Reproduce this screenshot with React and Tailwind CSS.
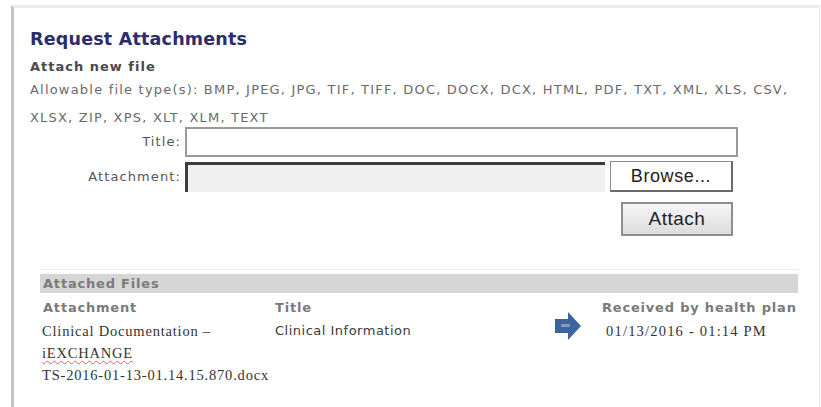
export default function App() {
  const sans = { fontFamily: '"DejaVu Sans", Verdana, sans-serif' };
  const serif = { fontFamily: '"Liberation Serif", "Times New Roman", serif' };
  const arial = { fontFamily: '"Liberation Sans", Arial, sans-serif' };

  return (
    <div className="w-[821px] h-[407px] bg-white pl-[11px] pt-[5px] overflow-hidden" style={sans}>
      <div className="h-[420px] w-[809px] border-l-[3px] border-t-[3px] border-r border-l-[#c4c4c4] border-t-[#ececec] border-r-[#e8e8e8] bg-white pl-[16px] pt-[19px]">
        <h1 className="text-[17.5px] leading-[24px] font-bold text-[#2c2c6c] tracking-[0.2px]">Request Attachments</h1>
        <div className="mt-[8px] text-[13px] leading-[16px] font-bold text-[#4a4a4a] tracking-[1px]">Attach new file</div>
        <p className="mt-[1px] text-[13px] leading-[28px] text-[#6a6a6a] w-[780px] tracking-[1.2px]">
          Allowable file type(s): BMP, JPEG, JPG, TIF, TIFF, DOC, DOCX, DCX, HTML, PDF, TXT, XML, XLS, CSV,
          XLSX, ZIP, XPS, XLT, XLM, TEXT
        </p>

        {/* upload form */}
        <div className="flex flex-col gap-[4px] -mt-[5px]">
          <div className="flex items-center">
            <label className="w-[153px] text-right text-[13px] text-[#555] pr-[2px] tracking-[1.1px]">Title:</label>
            <div className="ml-[2px] w-[553px] h-[30px] border-2 border-[#9a9a9a] bg-white" />
          </div>
          <div className="flex items-center">
            <label className="w-[153px] text-right text-[13px] text-[#555] pr-[2px] tracking-[1.1px]">Attachment:</label>
            <div className="ml-[2px] w-[420px] h-[30px] border-t-[3px] border-l-[3px] border-t-[#3c3c3c] border-l-[#3c3c3c] bg-[#f0f0f0]" />
            <button
              className="ml-[5px] w-[123px] h-[31px] border border-[#8c8c8c] border-r-2 border-b-2 border-r-[#6a6a6a] border-b-[#6a6a6a] bg-white text-[18px] tracking-[0.6px] text-[#222]"
              style={arial}
            >
              Browse...
            </button>
          </div>
          <div className="flex">
            <button
              className="ml-[591px] mt-[6px] w-[112px] h-[34px] border-2 border-[#8e8e8e] bg-gradient-to-b from-[#f6f6f6] to-[#dcdcdc] text-[19px] tracking-[0.5px] text-[#222]"
              style={arial}
            >
              Attach
            </button>
          </div>
        </div>

        {/* attached files table */}
        <div className="ml-[10px] mt-[33px] w-[758px] border-t border-[#ececec] pt-[4px]">
          <div className="h-[19px] bg-[#d6d6d6] pl-[3px] text-[13px] leading-[19px] font-bold text-[#7a7a7a] tracking-[0.8px]">Attached Files</div>
          <div className="flex text-[13px] font-bold text-[#7a7a7a] leading-[18px] mt-[6px] tracking-[0.8px]">
            <div className="w-[235px] pl-[3px]">Attachment</div>
            <div className="w-[327px]">Title</div>
            <div>Received by health plan</div>
          </div>
          <div className="flex mt-[3px]">
            <div className="w-[235px] pl-[2px] text-[14.5px] leading-[22px] text-[#333] tracking-[0.8px]" style={serif}>
              <div>Clinical Documentation –</div>
              <div>
                <span className="underline decoration-wavy decoration-[#e06060] decoration-1 underline-offset-2">iEXCHANGE</span>
              </div>
              <div>TS-2016-01-13-01.14.15.870.docx</div>
            </div>
            <div className="w-[280px] text-[13px] leading-[22px] text-[#3a3a3a] tracking-[0.5px]">Clinical Information</div>
            <div className="w-[51px] -mt-[8px]">
              <svg width="26" height="28" viewBox="0 0 26 28">
                <path d="M0 7 H13 V0 L26 14 L13 28 V21 H0 Z" fill="#3b64a0" />
                <rect x="6" y="12" width="9" height="3" rx="1" fill="#8a9bb4" />
              </svg>
            </div>
            <div className="text-[14.5px] leading-[22px] text-[#333] tracking-[1.2px]" style={serif}>01/13/2016 - 01:14 PM</div>
          </div>
        </div>
      </div>
    </div>
  );
}
